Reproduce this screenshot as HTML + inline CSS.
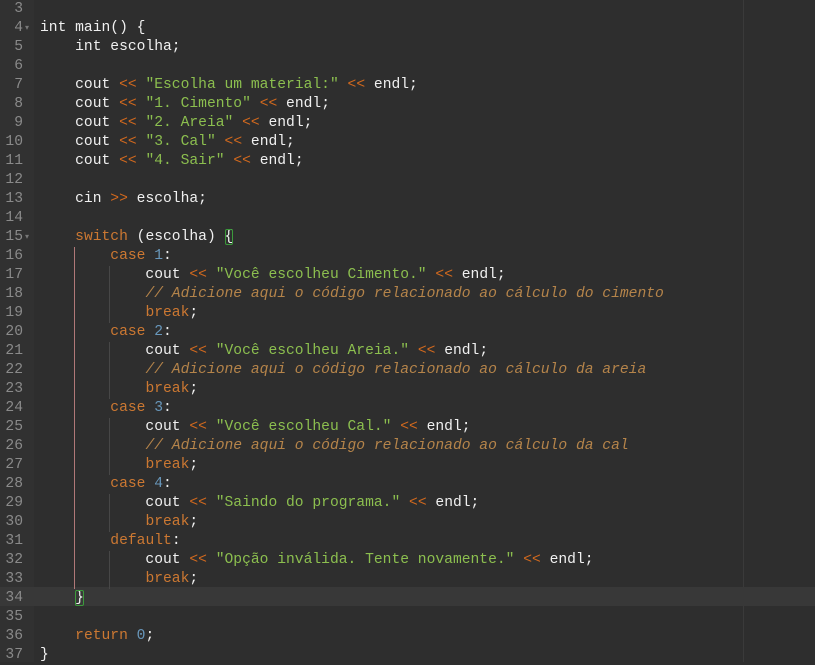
<!DOCTYPE html>
<html><head><meta charset="utf-8"><style>
html,body{margin:0;padding:0;width:815px;height:662px;overflow:hidden;background:#2e2e2e;}
#g{position:absolute;left:0;top:0;width:34px;height:662px;background:#313131;}
#m{position:absolute;left:743px;top:0;width:1px;height:662px;background:#3a3a3a;}
.r{position:absolute;left:0;width:815px;height:19px;font:14.65px/19px "Liberation Mono",monospace;color:#f0f0f0;white-space:pre;}
.n{position:absolute;left:0;width:23px;text-align:right;color:#8a8a8a;}
.f{position:absolute;left:25px;color:#777;font-size:8px;}
.c{position:absolute;left:40px;}
.k{color:#cc7832}.s{color:#8cbf4f}.o{color:#d2691e}.d{color:#6897bb}.cm{color:#b5844a;font-style:italic}
.act{background:#383838}
.gd{position:absolute;width:1px;}
</style></head><body>
<div id="g"></div><div id="m"></div>
<div class="r act" style="top:587px"></div>
<div class="gd" style="left:74px;top:247px;height:342px;background:#b07878"></div>
<div class="gd" style="left:109px;top:266px;height:57px;background:#474747"></div>
<div class="gd" style="left:109px;top:342px;height:57px;background:#474747"></div>
<div class="gd" style="left:109px;top:418px;height:57px;background:#474747"></div>
<div class="gd" style="left:109px;top:494px;height:38px;background:#474747"></div>
<div class="gd" style="left:109px;top:551px;height:38px;background:#474747"></div>
<div id="code"></div>
<script>
var L=[
"",
"int main() {",
"    int escolha;",
"",
"    cout <o><<</o> <s>\"Escolha um material:\"</s> <o><<</o> endl;",
"    cout <o><<</o> <s>\"1. Cimento\"</s> <o><<</o> endl;",
"    cout <o><<</o> <s>\"2. Areia\"</s> <o><<</o> endl;",
"    cout <o><<</o> <s>\"3. Cal\"</s> <o><<</o> endl;",
"    cout <o><<</o> <s>\"4. Sair\"</s> <o><<</o> endl;",
"",
"    cin <o>>></o> escolha;",
"",
"    <k>switch</k> (escolha) <b>{</b>",
"        <k>case</k> <d>1</d>:",
"            cout <o><<</o> <s>\"Você escolheu Cimento.\"</s> <o><<</o> endl;",
"            <cm>// Adicione aqui o código relacionado ao cálculo do cimento</cm>",
"            <k>break</k>;",
"        <k>case</k> <d>2</d>:",
"            cout <o><<</o> <s>\"Você escolheu Areia.\"</s> <o><<</o> endl;",
"            <cm>// Adicione aqui o código relacionado ao cálculo da areia</cm>",
"            <k>break</k>;",
"        <k>case</k> <d>3</d>:",
"            cout <o><<</o> <s>\"Você escolheu Cal.\"</s> <o><<</o> endl;",
"            <cm>// Adicione aqui o código relacionado ao cálculo da cal</cm>",
"            <k>break</k>;",
"        <k>case</k> <d>4</d>:",
"            cout <o><<</o> <s>\"Saindo do programa.\"</s> <o><<</o> endl;",
"            <k>break</k>;",
"        <k>default</k>:",
"            cout <o><<</o> <s>\"Opção inválida. Tente novamente.\"</s> <o><<</o> endl;",
"            <k>break</k>;",
"    <b>}</b>",
"",
"    <k>return</k> <d>0</d>;",
"}"];
var h="";
for(var i=0;i<L.length;i++){
 var t=L[i].replace(/<o><<<\/o>/g,'<span class="o">&lt;&lt;</span>').replace(/<o>>><\/o>/g,'<span class="o">&gt;&gt;</span>')
 .replace(/<s>/g,'<span class="s">').replace(/<\/s>/g,'</span>')
 .replace(/<k>/g,'<span class="k">').replace(/<\/k>/g,'</span>')
 .replace(/<d>/g,'<span class="d">').replace(/<\/d>/g,'</span>')
 .replace(/<cm>/g,'<span class="cm">').replace(/<\/cm>/g,'</span>')
 .replace(/<b>/g,'<span style="outline:1px solid #3c9a3c;outline-offset:-1px;border-radius:2px">').replace(/<\/b>/g,'</span>');
 var n=i+3, f=(n==4||n==15)?'<span class="f" style="top:0">▾</span>':'';
 h+='<div class="r" style="top:'+(i*19)+'px"><span class="n">'+n+'</span>'+f+'<span class="c">'+t+'</span></div>';
}
document.getElementById("code").innerHTML=h;
</script>
</body></html>
